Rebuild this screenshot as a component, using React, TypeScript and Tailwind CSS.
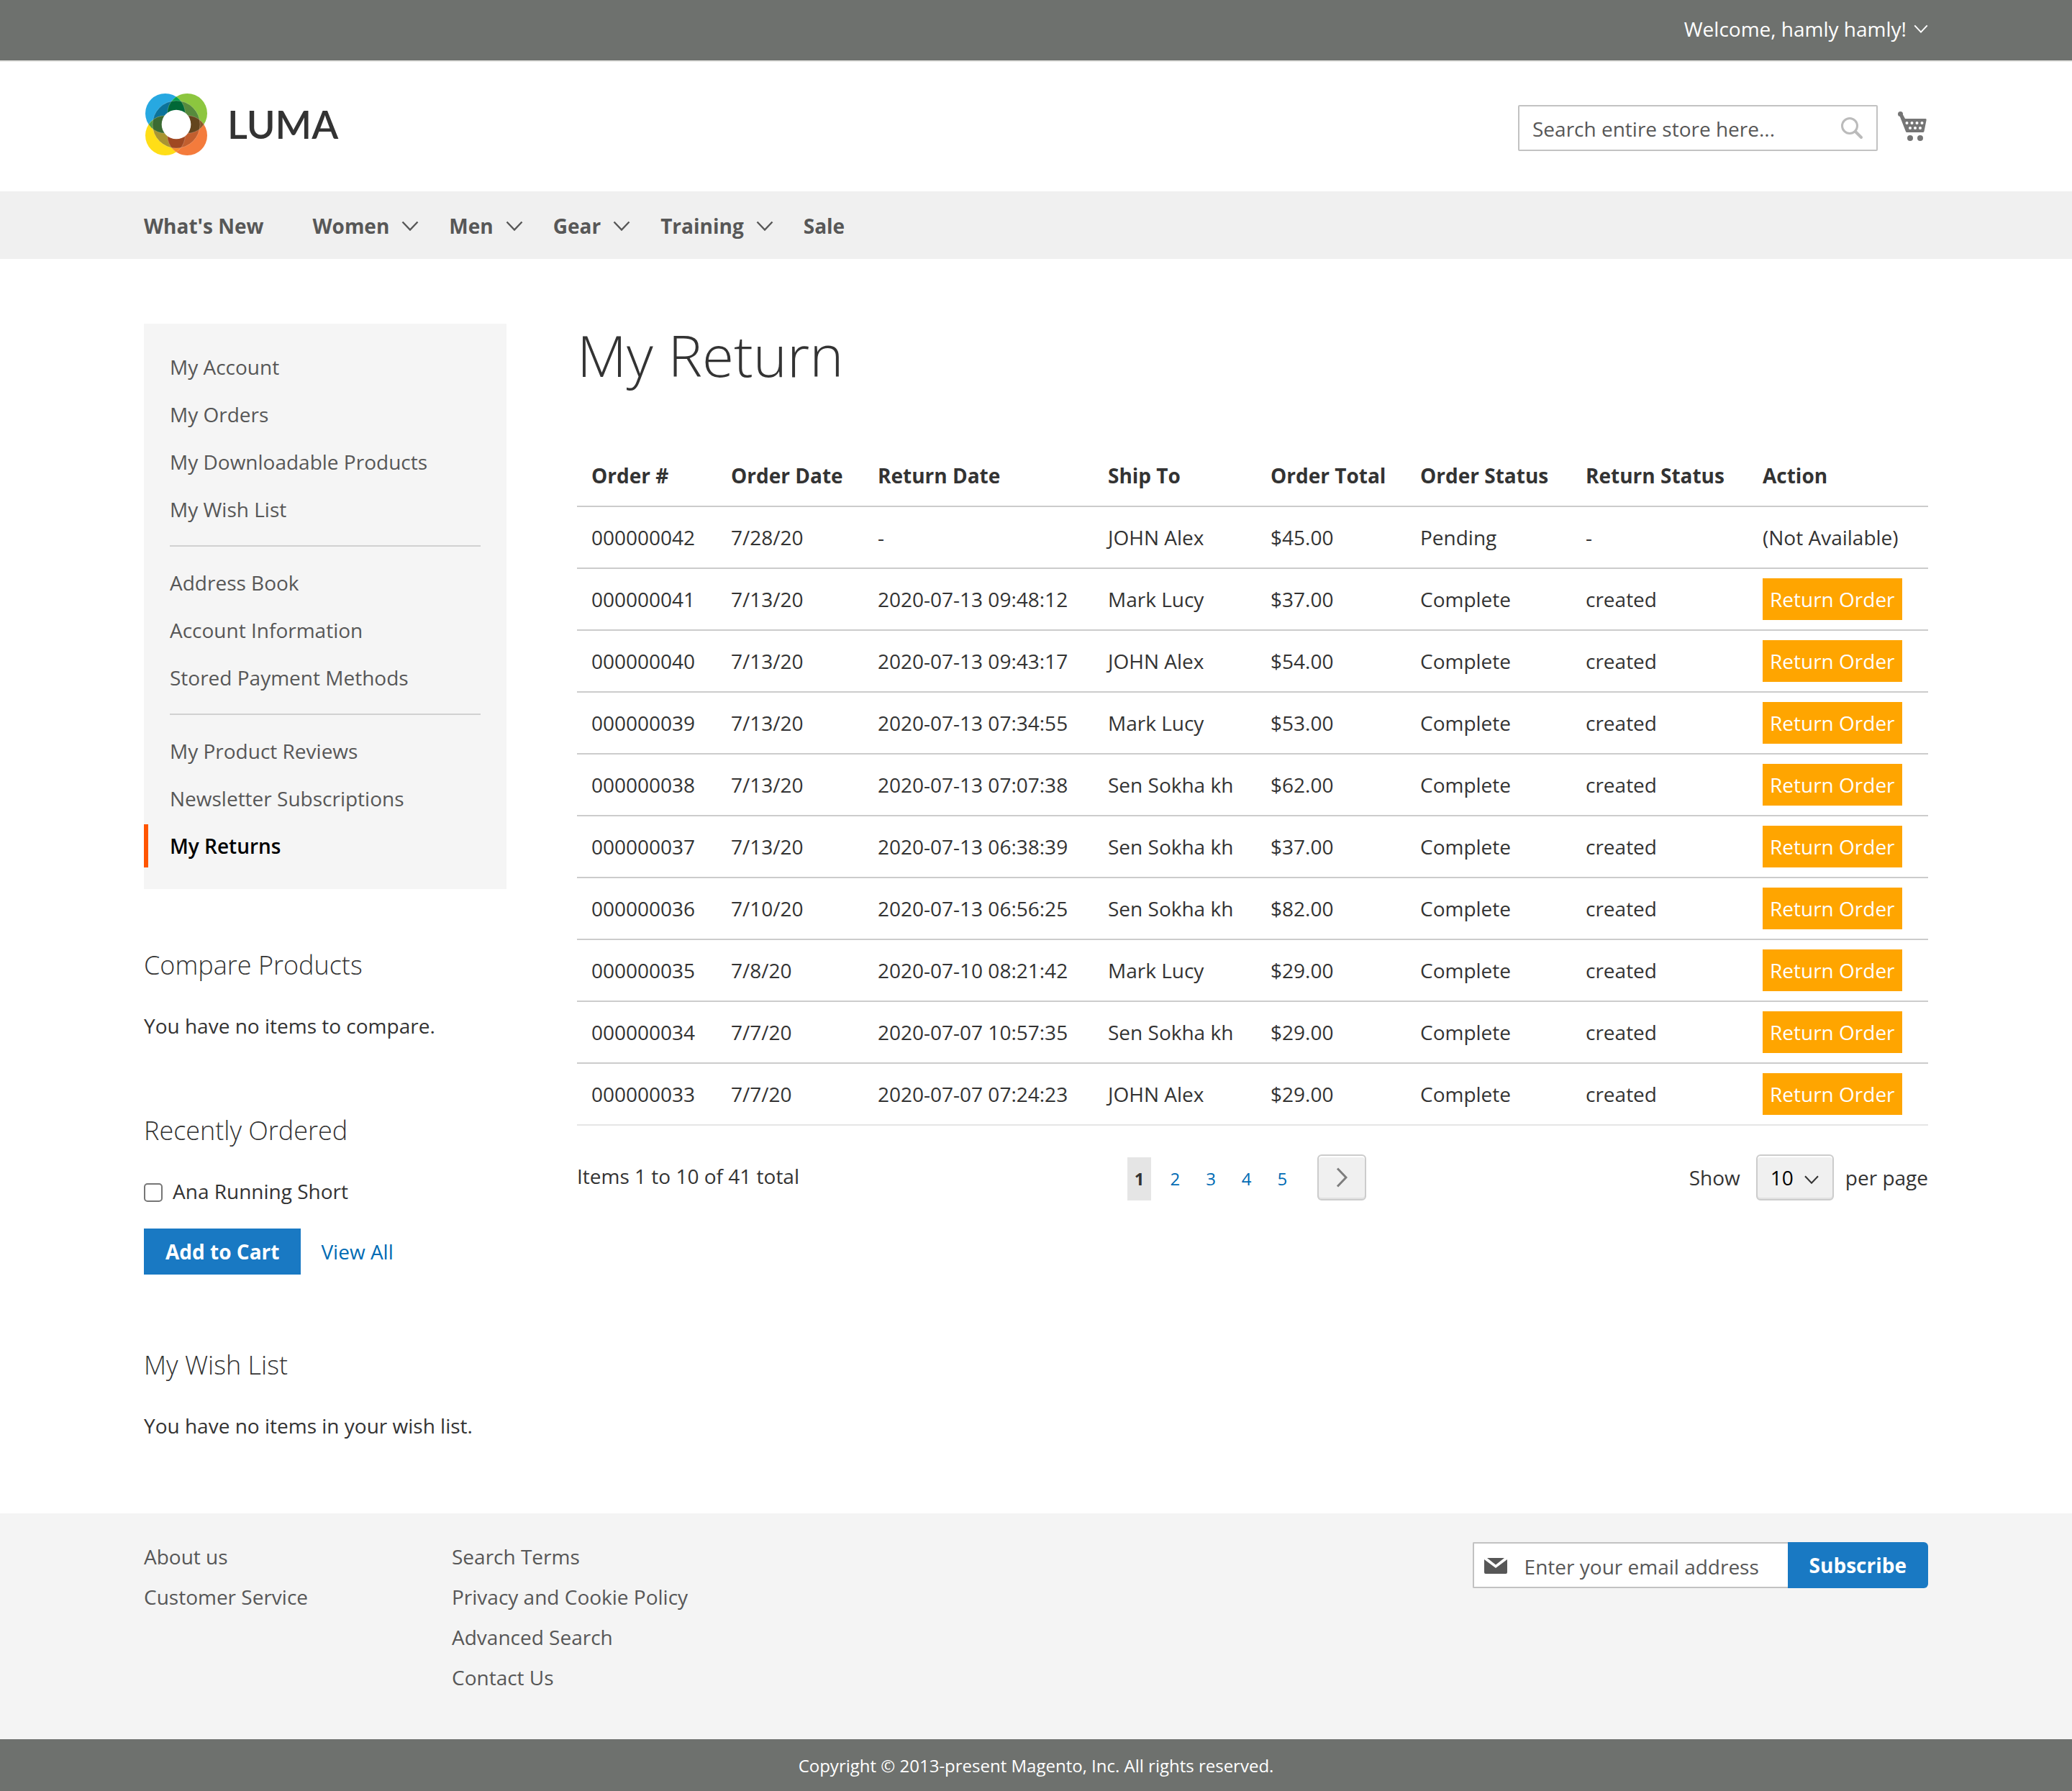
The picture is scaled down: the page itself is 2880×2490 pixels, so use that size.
import React from "react";

type Order = {
  id: string;
  date: string;
  returned: string;
  ship: string;
  total: string;
  status: string;
  returnStatus: string;
};

const orders: Order[] = [
  { id: "000000042", date: "7/28/20", returned: "-", ship: "JOHN Alex", total: "$45.00", status: "Pending", returnStatus: "-" },
  { id: "000000041", date: "7/13/20", returned: "2020-07-13 09:48:12", ship: "Mark Lucy", total: "$37.00", status: "Complete", returnStatus: "created" },
  { id: "000000040", date: "7/13/20", returned: "2020-07-13 09:43:17", ship: "JOHN Alex", total: "$54.00", status: "Complete", returnStatus: "created" },
  { id: "000000039", date: "7/13/20", returned: "2020-07-13 07:34:55", ship: "Mark Lucy", total: "$53.00", status: "Complete", returnStatus: "created" },
  { id: "000000038", date: "7/13/20", returned: "2020-07-13 07:07:38", ship: "Sen Sokha kh", total: "$62.00", status: "Complete", returnStatus: "created" },
  { id: "000000037", date: "7/13/20", returned: "2020-07-13 06:38:39", ship: "Sen Sokha kh", total: "$37.00", status: "Complete", returnStatus: "created" },
  { id: "000000036", date: "7/10/20", returned: "2020-07-13 06:56:25", ship: "Sen Sokha kh", total: "$82.00", status: "Complete", returnStatus: "created" },
  { id: "000000035", date: "7/8/20", returned: "2020-07-10 08:21:42", ship: "Mark Lucy", total: "$29.00", status: "Complete", returnStatus: "created" },
  { id: "000000034", date: "7/7/20", returned: "2020-07-07 10:57:35", ship: "Sen Sokha kh", total: "$29.00", status: "Complete", returnStatus: "created" },
  { id: "000000033", date: "7/7/20", returned: "2020-07-07 07:24:23", ship: "JOHN Alex", total: "$29.00", status: "Complete", returnStatus: "created" },
];

const columns = [
  { label: "Order #", width: "w-[194px]" },
  { label: "Order Date", width: "w-[204px]" },
  { label: "Return Date", width: "w-[320px]" },
  { label: "Ship To", width: "w-[226px]" },
  { label: "Order Total", width: "w-[208px]" },
  { label: "Order Status", width: "w-[230px]" },
  { label: "Return Status", width: "w-[246px]" },
  { label: "Action", width: "w-auto" },
];

const menu = [
  { label: "What's New", open: false },
  { label: "Women", open: true },
  { label: "Men", open: true },
  { label: "Gear", open: true },
  { label: "Training", open: true },
  { label: "Sale", open: false },
];

const accountGroups = [
  ["My Account", "My Orders", "My Downloadable Products", "My Wish List"],
  ["Address Book", "Account Information", "Stored Payment Methods"],
  ["My Product Reviews", "Newsletter Subscriptions", "My Returns"],
];

const footerColumns = [
  ["About us", "Customer Service"],
  ["Search Terms", "Privacy and Cookie Policy", "Advanced Search", "Contact Us"],
];

function ChevronDown({ className }: { className: string }) {
  return (
    <svg viewBox="0 0 24 14" className={className} fill="none" stroke="currentColor" strokeWidth="2.4" aria-hidden="true">
      <path d="M1.5 1.5 12 12.5 22.5 1.5" />
    </svg>
  );
}

function LogoMark() {
  return (
    <svg viewBox="66 90 258 258" className="size-[86px]" aria-hidden="true">
      <defs>
        <clipPath id="blue"><circle cx="149" cy="173" r="83" /></clipPath>
        <clipPath id="green"><circle cx="241" cy="173" r="83" /></clipPath>
        <clipPath id="yellow"><circle cx="149" cy="265" r="83" /></clipPath>
        <clipPath id="orange"><circle cx="241" cy="265" r="83" /></clipPath>
      </defs>
      <circle cx="149" cy="173" r="83" fill="#27a8e1" />
      <circle cx="241" cy="173" r="83" fill="#8cc63f" />
      <circle cx="149" cy="265" r="83" fill="#ffde17" />
      <circle cx="241" cy="265" r="83" fill="#f47b3c" />
      <g clipPath="url(#blue)">
        <circle cx="195" cy="219" r="99" fill="#0b739b" />
        <circle cx="241" cy="173" r="83" fill="#00a14b" />
        <circle cx="149" cy="265" r="83" fill="#4f9a43" />
      </g>
      <g clipPath="url(#green)">
        <g clipPath="url(#orange)">
          <circle cx="241" cy="219" r="90" fill="#8a5a2b" />
        </g>
      </g>
      <g clipPath="url(#yellow)">
        <g clipPath="url(#orange)">
          <circle cx="195" cy="265" r="90" fill="#f68b2a" />
        </g>
      </g>
      <g clipPath="url(#green)"><circle cx="195" cy="219" r="99" fill="#578a3d" /></g>
      <g clipPath="url(#yellow)"><circle cx="195" cy="219" r="99" fill="#a99531" /></g>
      <g clipPath="url(#orange)"><circle cx="195" cy="219" r="99" fill="#c25e2e" /></g>
      <g clipPath="url(#blue)">
        <g clipPath="url(#green)"><circle cx="195" cy="219" r="99" fill="#006837" /></g>
        <g clipPath="url(#yellow)"><circle cx="195" cy="219" r="99" fill="#3b6b33" /></g>
      </g>
      <g clipPath="url(#orange)">
        <g clipPath="url(#green)"><circle cx="195" cy="219" r="99" fill="#64451e" /></g>
        <g clipPath="url(#yellow)"><circle cx="195" cy="219" r="99" fill="#a04822" /></g>
      </g>
      <g fill="none" stroke="#ffffff" strokeOpacity="0.4" strokeWidth="1.5">
        <g clipPath="url(#green)"><circle cx="149" cy="173" r="83" /><circle cx="241" cy="265" r="83" /></g>
        <g clipPath="url(#yellow)"><circle cx="149" cy="173" r="83" /><circle cx="241" cy="265" r="83" /></g>
        <g clipPath="url(#blue)"><circle cx="241" cy="173" r="83" /><circle cx="149" cy="265" r="83" /></g>
        <g clipPath="url(#orange)"><circle cx="241" cy="173" r="83" /><circle cx="149" cy="265" r="83" /></g>
        <circle cx="195" cy="219" r="99" />
      </g>
      <circle cx="195" cy="219" r="61" fill="#ffffff" />
    </svg>
  );
}

function CartIcon() {
  return (
    <svg viewBox="0 0 40 42" className="h-[42px] w-[40px]" fill="#757575" aria-hidden="true">
      <circle cx="3.5" cy="3.5" r="3.5" />
      <path d="M2 5 6 2.500 10 10H38.500Q40 10 39.600 12L36.500 27.500Q36.200 29 34.500 29H12.500Q11.300 29 11 28Z" />
      <circle cx="17" cy="37" r="4" />
      <circle cx="31" cy="37" r="4" />
      <g fill="#ffffff">
        <circle cx="12.5" cy="16" r="2" />
        <circle cx="19.5" cy="16" r="2" />
        <circle cx="26.5" cy="16" r="2" />
        <circle cx="33.5" cy="16" r="2" />
        <circle cx="17" cy="23" r="2" />
        <circle cx="24" cy="23" r="2" />
        <circle cx="31" cy="23" r="2" />
      </g>
    </svg>
  );
}

function Header() {
  return (
    <header>
      <div className="flex h-[86px] justify-end border-b-2 border-[#e8e8e6] bg-[#6e716e] px-[200px] pt-5 text-white">
        <button type="button" className="flex h-10 items-center gap-2.5">
          Welcome, hamly hamly!
          <ChevronDown className="h-3 w-5" />
        </button>
      </div>
      <div className="flex h-[180px] items-start justify-between px-[200px]">
        <a href="#" className="mt-[44px] ml-0.5 flex items-center gap-7" aria-label="LUMA">
          <LogoMark />
          <span className="font-['Lato'] text-[54px] leading-[86px] font-semibold text-[#333]">LUMA</span>
        </a>
        <div className="mt-[60px] flex items-center gap-7">
          <form className="relative">
            <input
              type="text"
              aria-label="Search"
              placeholder="Search entire store here..."
              className="h-16 w-[500px] rounded-[2px] border-2 border-[#c2c2c2] bg-white pt-0.5 pr-14 pl-[18px] placeholder:text-[#575757] placeholder:opacity-100"
            />
            <button type="button" aria-label="Search" className="absolute top-[17px] right-[21px]">
              <svg viewBox="0 0 30 30" className="size-[30px]" fill="none" stroke="#bbbbbb" aria-hidden="true">
                <circle cx="12" cy="12" r="10.5" strokeWidth="3" />
                <path d="M20 20 28 28" strokeWidth="4" strokeLinecap="round" />
              </svg>
            </button>
          </form>
          <a href="#" aria-label="My Cart" className="mr-0.5 -mt-1">
            <CartIcon />
          </a>
        </div>
      </div>
      <nav className="flex h-[94px] items-center gap-[42px] bg-[#f0f0f0] px-[200px] pt-0.5 font-bold text-[#575757]">
        {menu.map((m) => (
          <a key={m.label} href="#" className="flex items-center gap-[17px] first:mr-[26px]">
            {m.label}
            {m.open && <ChevronDown className="h-3.5 w-6" />}
          </a>
        ))}
      </nav>
    </header>
  );
}

function Sidebar() {
  return (
    <aside className="w-[504px] shrink-0">
      <nav className="bg-[#f5f5f5] py-[30px] text-[#575757]">
        {accountGroups.map((group, i) => (
          <React.Fragment key={group[0]}>
            {i > 0 && <hr className="mx-9 my-5 border-t-2 border-[#d1d1d1]" />}
            <ul className="flex flex-col gap-1.5">
              {group.map((item) => (
                <li key={item}>
                  {item === "My Returns" ? (
                    <a href="#" aria-current="page" className="block border-l-[6px] border-[#ff5501] py-2.5 pl-[30px] font-semibold text-black">
                      {item}
                    </a>
                  ) : (
                    <a href="#" className="block py-2.5 pl-9">{item}</a>
                  )}
                </li>
              ))}
            </ul>
          </React.Fragment>
        ))}
      </nav>
      <section className="mt-[86px]">
        <h2 className="text-4xl leading-10 font-light">Compare Products</h2>
        <p className="mt-11">You have no items to compare.</p>
      </section>
      <section className="mt-[106px]">
        <h2 className="text-4xl leading-10 font-light">Recently Ordered</h2>
        <label className="mt-11 flex items-center gap-3.5">
          <input type="checkbox" className="mt-1 size-[26px] appearance-none rounded-[5px] border-2 border-[#767676] bg-white" />
          Ana Running Short
        </label>
        <div className="mt-8 flex items-center gap-7">
          <button type="button" className="h-16 bg-[#1979c3] px-[30px] font-bold text-white">Add to Cart</button>
          <a href="#" className="text-[#006bb4]">View All</a>
        </div>
      </section>
      <section className="mt-[106px]">
        <h2 className="text-4xl leading-10 font-light">My Wish List</h2>
        <p className="mt-11">You have no items in your wish list.</p>
      </section>
    </aside>
  );
}

function OrdersTable() {
  return (
    <table className="mt-[83px] w-full table-fixed border-collapse text-left">
      <thead>
        <tr className="border-b-2 border-[#ccc]">
          {columns.map((c) => (
            <th key={c.label} scope="col" className={`${c.width} px-5 py-[22px] font-bold`}>
              {c.label}
            </th>
          ))}
        </tr>
      </thead>
      <tbody>
        {orders.map((o) => (
          <tr key={o.id} className="h-[86px] border-b-2 border-[#ccc] last:border-[#e5e5e5]">
            <td className="px-5">{o.id}</td>
            <td className="px-5">{o.date}</td>
            <td className="px-5">{o.returned}</td>
            <td className="px-5">{o.ship}</td>
            <td className="px-5">{o.total}</td>
            <td className="px-5">{o.status}</td>
            <td className="px-5">{o.returnStatus}</td>
            <td className="pl-5 whitespace-nowrap">
              {o.returnStatus === "created" ? (
                <a href="#" className="bg-[#ffa500] p-2.5 text-white">Return Order</a>
              ) : (
                "(Not Available)"
              )}
            </td>
          </tr>
        ))}
      </tbody>
    </table>
  );
}

function Pager() {
  return (
    <div className="mt-10 grid grid-cols-[1fr_auto_1fr] items-center">
      <p className="-mt-1">Items 1 to 10 of 41 total</p>
      <nav aria-label="Page" className="mr-4 flex items-end gap-4 text-2xl leading-[60px]">
        <span aria-current="page" className="bg-[#e5e5e5] px-2.5 font-bold">1</span>
        {["2", "3", "4", "5"].map((n) => (
          <a key={n} href="#" className="px-2.5 text-[#006bb4]">{n}</a>
        ))}
        <a
          href="#"
          aria-label="Next"
          className="ml-4 flex h-16 w-[68px] items-center justify-center rounded-md border-2 border-[#ccc] bg-[#f0f0f0] text-[#7d7d7d] shadow-[inset_0_2px_0_#fff,inset_0_-2px_0_#e2e2e2]"
        >
          <svg viewBox="0 0 16 28" className="h-7 w-4" fill="none" stroke="currentColor" strokeWidth="3" aria-hidden="true">
            <path d="M2 1.5 14 14 2 26.5" />
          </svg>
        </a>
      </nav>
      <div className="flex items-center justify-end gap-4">
        <label htmlFor="limiter" className="mr-1.5">Show</label>
        <div className="relative">
          <select
            id="limiter"
            defaultValue="10"
            className="h-16 w-[108px] appearance-none rounded-md border-2 border-[#ccc] bg-[#f0f0f0] pl-[18px] text-black shadow-[inset_0_2px_0_#fff,inset_0_-2px_0_#e2e2e2]"
          >
            <option>10</option>
            <option>20</option>
            <option>50</option>
          </select>
          <ChevronDown className="pointer-events-none absolute top-[29px] right-5 h-3 w-[22px]" />
        </div>
        <span>per page</span>
      </div>
    </div>
  );
}

function Footer() {
  return (
    <footer>
      <div className="flex h-[314px] items-start justify-between bg-[#f4f4f4] px-[200px] pt-10">
        <div className="flex text-[#575757]">
          {footerColumns.map((list) => (
            <ul key={list[0]} className="flex min-w-[428px] flex-col gap-4">
              {list.map((item) => (
                <li key={item}><a href="#">{item}</a></li>
              ))}
            </ul>
          ))}
        </div>
        <form className="flex">
          <div className="relative">
            <svg viewBox="0 0 32 22" className="absolute top-[22px] left-4 h-[22px] w-8" fill="#575757" aria-hidden="true">
              <path d="M4 0H28L16 9.500Z" />
              <path d="M0 2 16 14 32 2V20Q32 22 30 22H2Q0 22 0 20Z" />
            </svg>
            <input
              type="email"
              aria-label="Email address"
              placeholder="Enter your email address"
              className="h-16 w-[438px] rounded-l-[2px] border-2 border-r-0 border-[#c2c2c2] bg-white pt-1 pl-[70px] placeholder:text-[#575757] placeholder:opacity-100"
            />
          </div>
          <button type="button" className="h-16 rounded-r-md bg-[#1979c3] px-[30px] font-bold text-white">Subscribe</button>
        </form>
      </div>
      <div className="h-[74px] bg-[#6e716e] text-center text-2xl leading-[74px] text-white">
        Copyright © 2013-present Magento, Inc. All rights reserved.
      </div>
    </footer>
  );
}

export default function App() {
  return (
    <div className="bg-white font-['Open_Sans',sans-serif] text-[28px] leading-10 text-[#333]">
      <Header />
      <div className="flex gap-[98px] px-[200px] pt-[90px] pb-[102px]">
        <Sidebar />
        <main className="min-w-0 grow">
          <h1 className="text-[80px] leading-[86px] font-light">My Return</h1>
          <OrdersTable />
          <Pager />
        </main>
      </div>
      <Footer />
    </div>
  );
}
